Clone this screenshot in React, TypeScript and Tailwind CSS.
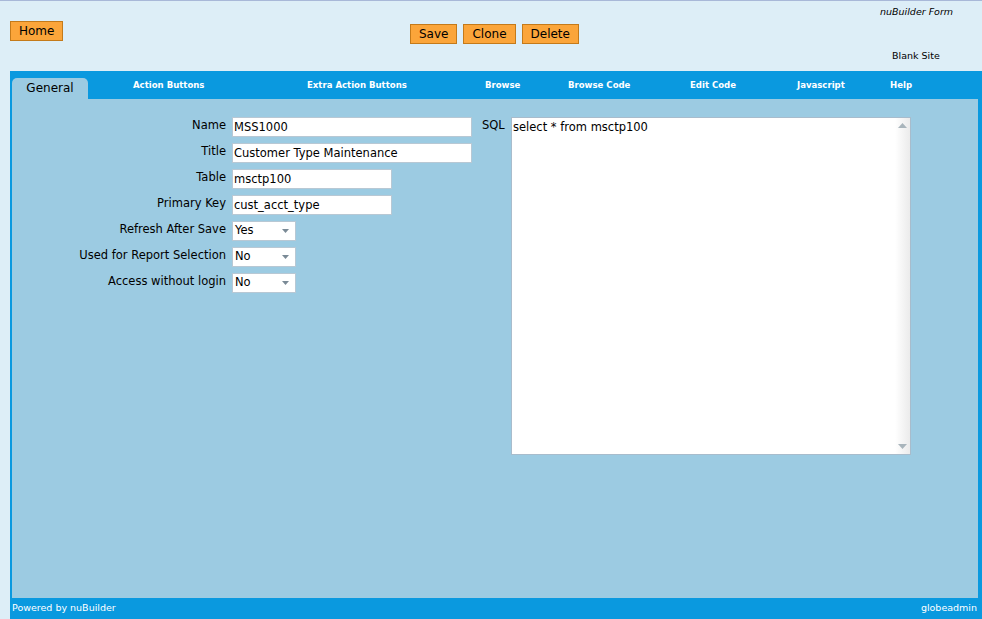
import React from "react";

const font = { fontFamily: "Tahoma, 'DejaVu Sans', 'Liberation Sans', sans-serif" };
const tabFont = { fontFamily: "'DejaVu Sans Condensed', 'DejaVu Sans', sans-serif" };

function Btn({ children }: { children: React.ReactNode }) {
  return (
    <div className="h-[20px] px-[8px] bg-[#fba53a] border border-[#c47a1a] text-black text-[12px] leading-[18px] flex items-center">
      {children}
    </div>
  );
}

function Input({ value, w }: { value: string; w: string }) {
  return (
    <div className={`${w} shrink-0 h-[20px] bg-white border border-[#b8c8d4] text-[11.5px] leading-[18px] px-[1px] text-black whitespace-nowrap overflow-hidden`}>
      {value}
    </div>
  );
}

function Select({ value }: { value: string }) {
  return (
    <div className="w-[64px] shrink-0 h-[20px] bg-white border border-[#b8c8d4] flex items-center justify-between pl-[2px] pr-[6px] text-[11.5px] text-black">
      <span>{value}</span>
      <svg width="7" height="4" viewBox="0 0 7 4"><path d="M0 0h7L3.5 4z" fill="#7a8a96" /></svg>
    </div>
  );
}

export default function App() {
  const tabs = [
    ["Action Buttons", "w-[174px]"],
    ["Extra Action Buttons", "w-[178px]"],
    ["Browse", "w-[83px]"],
    ["Browse Code", "w-[122px]"],
    ["Edit Code", "w-[107px]"],
    ["Javascript", "w-[93px]"],
    ["Help", "w-[60px]"],
  ];
  const rows: [string, React.ReactNode][] = [
    ["Name", <Input value="MSS1000" w="w-[240px]" />],
    ["Title", <Input value="Customer Type Maintenance" w="w-[240px]" />],
    ["Table", <Input value="msctp100" w="w-[160px]" />],
    ["Primary Key", <Input value="cust_acct_type" w="w-[160px]" />],
    ["Refresh After Save", <Select value="Yes" />],
    ["Used for Report Selection", <Select value="No" />],
    ["Access without login", <Select value="No" />],
  ];
  return (
    <div className="w-[982px] h-[619px] bg-[#ddeef7] border-t border-[#a8b8d8] flex flex-col overflow-hidden" style={font}>
      <div className="h-[70px] relative flex">
        <div className="pl-[10px] pt-[20px]"><Btn>Home</Btn></div>
        <div className="absolute left-[410px] top-[23px] flex gap-[6px]">
          <Btn>Save</Btn>
          <Btn>Clone</Btn>
          <Btn>Delete</Btn>
        </div>
        <div className="absolute left-[880px] top-[4px] text-[9.5px] italic text-black">nuBuilder Form</div>
        <div className="absolute left-[892px] top-[48px] text-[9.5px] text-black">Blank Site</div>
      </div>
      <div className="ml-[10px] flex-1 bg-[#0a99df] flex flex-col">
        <div className="h-[28px] flex items-end pl-[2px]">
          <div className="w-[76px] h-[21px] bg-[#9ccbe2] rounded-t-[5px] text-[12px] text-black flex items-center justify-center pb-[2px]">General</div>
          <div className="w-[45px]" />
          {tabs.map(([t, w]) => (
            <div key={t} className={`${w} h-[28px] flex items-center text-white font-bold text-[9.5px]`} style={tabFont}>
              {t}
            </div>
          ))}
        </div>
        <div className="ml-[2px] mr-[4px] flex-1 bg-[#9ccbe2] flex pt-[18px]">
          <div className="w-[460px] shrink-0 flex flex-col gap-[6px]">
            {rows.map(([l, c]) => (
              <div key={l} className="flex h-[20px]">
                <div className="w-[220px] shrink-0 text-right pr-[6px] text-[11.5px] text-black leading-[16px] whitespace-nowrap">{l}</div>
                {c}
              </div>
            ))}
          </div>
          <div className="flex">
            <div className="w-[29px] text-[11.5px] text-black leading-[16px] pl-[10px] box-content">SQL</div>
            <div className="w-[400px] h-[338px] bg-white border border-[#a8bccc] flex">
              <div className="flex-1 text-[11.5px] leading-[18px] px-[1px] text-black">select * from msctp100</div>
              <div className="w-[15px] bg-gradient-to-r from-white to-[#ebebeb] flex flex-col justify-between items-center py-[5px]">
                <svg width="9" height="5" viewBox="0 0 9 5"><path d="M0 5h9L4.5 0z" fill="#a9b5bc" /></svg>
                <svg width="9" height="5" viewBox="0 0 9 5"><path d="M0 0h9L4.5 5z" fill="#a9b5bc" /></svg>
              </div>
            </div>
          </div>
        </div>
        <div className="h-[21px] flex items-center justify-between px-[2px] text-white text-[9.5px]">
          <span>Powered by nuBuilder</span>
          <span className="pr-[3px]">globeadmin</span>
        </div>
      </div>
    </div>
  );
}
